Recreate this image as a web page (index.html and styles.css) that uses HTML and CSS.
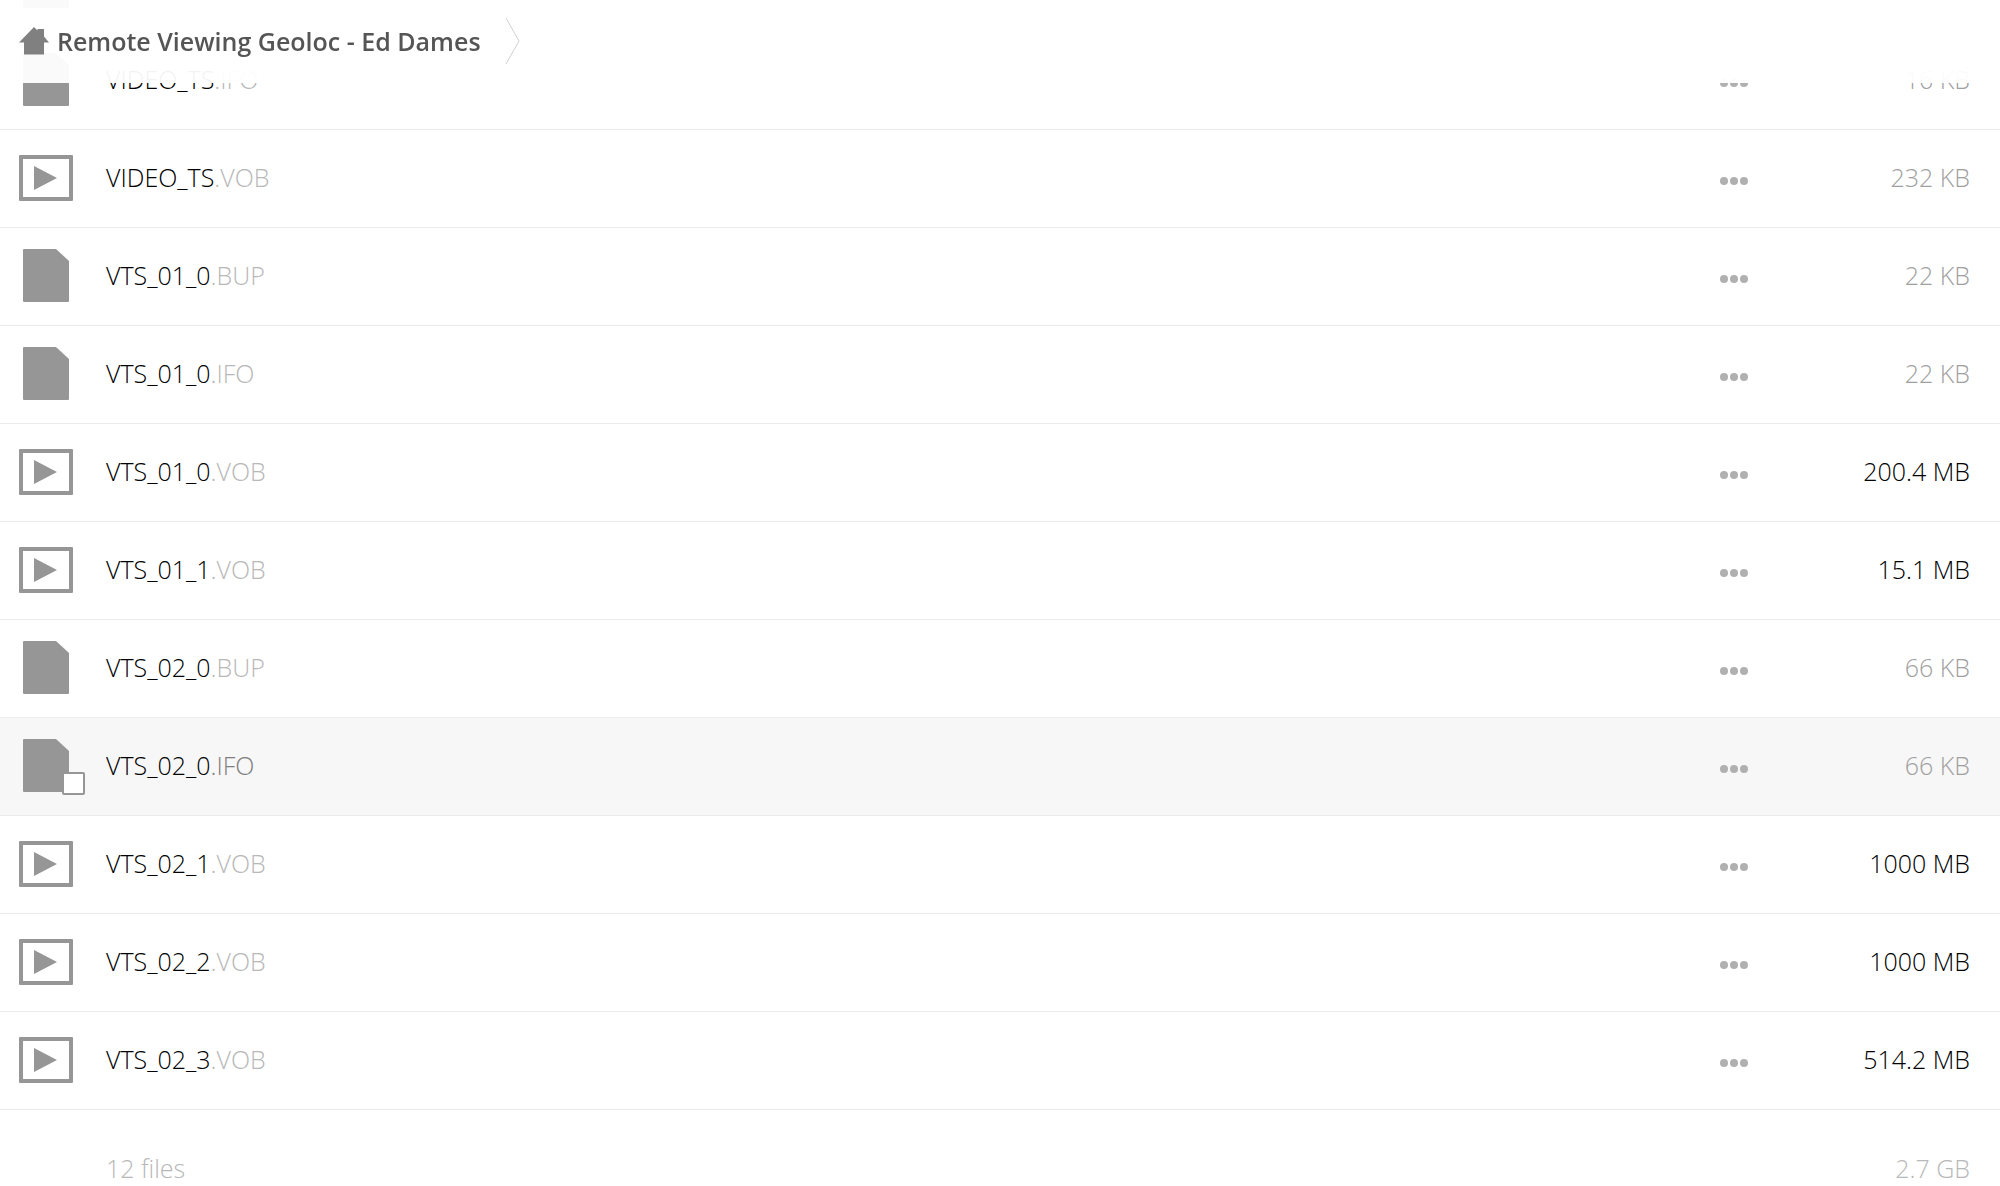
FILE: index.html
```
<!DOCTYPE html>
<html lang="en">

<head>
    <meta charset="utf-8">
    <meta name="viewport" content="width=device-width, initial-scale=1.0">
    <title>Remote Viewing Geoloc - Ed Dames</title>
    <link rel="stylesheet" href="styles.css">
</head>

<body>
    <!-- shared icons -->
    <svg class="sprite" aria-hidden="true">
        <symbol id="icon-file" viewBox="0 0 54 54">
            <path d="M5 0H37L50 12V52a1 1 0 0 1-1 1H5a1 1 0 0 1-1-1V1a1 1 0 0 1 1-1z" />
        </symbol>
        <symbol id="icon-video" viewBox="0 0 54 54">
            <path fill-rule="evenodd" d="M1 4H53a1 1 0 0 1 1 1V49a1 1 0 0 1-1 1H1a1 1 0 0 1-1-1V5a1 1 0 0 1 1-1zM4 8V46H50V8z" />
            <path d="M15 15L38 27L15 39z" />
        </symbol>
        <symbol id="icon-more" viewBox="0 0 28 8">
            <circle cx="4" cy="4" r="4" />
            <circle cx="14" cy="4" r="4" />
            <circle cx="24" cy="4" r="4" />
        </symbol>
    </svg>

    <header id="controls">
        <nav class="breadcrumb">
            <a class="home" href="#" aria-label="Home">
                <svg width="30" height="28" viewBox="0 0 30 28">
                    <path d="M15 0L18.500 3.500V2H25V9.500L30 15.500H25V27.500H5V15.500H0z" />
                </svg>
            </a>
            <a class="crumb" href="#">Remote Viewing Geoloc - Ed Dames</a>
            <svg class="separator" width="16" height="48" viewBox="0 0 16 48">
                <path d="M1 1L14 24L1 47" />
            </svg>
        </nav>
    </header>

    <main id="content">
        <table id="filestable">
            <tbody>
                <tr>
                    <td class="icon"><svg><use href="#icon-file" /></svg></td>
                    <td class="name"><a href="#">VIDEO_TS<span class="extension">.BUP</span></a></td>
                    <td class="actions"><button aria-label="More"><svg><use href="#icon-more" /></svg></button></td>
                    <td class="size small">16 KB</td>
                </tr>
                <tr>
                    <td class="icon"><svg><use href="#icon-file" /></svg></td>
                    <td class="name"><a href="#">VIDEO_TS<span class="extension">.IFO</span></a></td>
                    <td class="actions"><button aria-label="More"><svg><use href="#icon-more" /></svg></button></td>
                    <td class="size small">16 KB</td>
                </tr>
                <tr>
                    <td class="icon"><svg><use href="#icon-video" /></svg></td>
                    <td class="name"><a href="#">VIDEO_TS<span class="extension">.VOB</span></a></td>
                    <td class="actions"><button aria-label="More"><svg><use href="#icon-more" /></svg></button></td>
                    <td class="size small">232 KB</td>
                </tr>
                <tr>
                    <td class="icon"><svg><use href="#icon-file" /></svg></td>
                    <td class="name"><a href="#">VTS_01_0<span class="extension">.BUP</span></a></td>
                    <td class="actions"><button aria-label="More"><svg><use href="#icon-more" /></svg></button></td>
                    <td class="size small">22 KB</td>
                </tr>
                <tr>
                    <td class="icon"><svg><use href="#icon-file" /></svg></td>
                    <td class="name"><a href="#">VTS_01_0<span class="extension">.IFO</span></a></td>
                    <td class="actions"><button aria-label="More"><svg><use href="#icon-more" /></svg></button></td>
                    <td class="size small">22 KB</td>
                </tr>
                <tr>
                    <td class="icon"><svg><use href="#icon-video" /></svg></td>
                    <td class="name"><a href="#">VTS_01_0<span class="extension">.VOB</span></a></td>
                    <td class="actions"><button aria-label="More"><svg><use href="#icon-more" /></svg></button></td>
                    <td class="size">200.4 MB</td>
                </tr>
                <tr>
                    <td class="icon"><svg><use href="#icon-video" /></svg></td>
                    <td class="name"><a href="#">VTS_01_1<span class="extension">.VOB</span></a></td>
                    <td class="actions"><button aria-label="More"><svg><use href="#icon-more" /></svg></button></td>
                    <td class="size">15.1 MB</td>
                </tr>
                <tr>
                    <td class="icon"><svg><use href="#icon-file" /></svg></td>
                    <td class="name"><a href="#">VTS_02_0<span class="extension">.BUP</span></a></td>
                    <td class="actions"><button aria-label="More"><svg><use href="#icon-more" /></svg></button></td>
                    <td class="size small">66 KB</td>
                </tr>
                <tr class="current">
                    <td class="icon">
                        <svg><use href="#icon-file" /></svg>
                        <input type="checkbox" aria-label="Select VTS_02_0.IFO">
                    </td>
                    <td class="name"><a href="#">VTS_02_0<span class="extension">.IFO</span></a></td>
                    <td class="actions"><button aria-label="More"><svg><use href="#icon-more" /></svg></button></td>
                    <td class="size small">66 KB</td>
                </tr>
                <tr>
                    <td class="icon"><svg><use href="#icon-video" /></svg></td>
                    <td class="name"><a href="#">VTS_02_1<span class="extension">.VOB</span></a></td>
                    <td class="actions"><button aria-label="More"><svg><use href="#icon-more" /></svg></button></td>
                    <td class="size">1000 MB</td>
                </tr>
                <tr>
                    <td class="icon"><svg><use href="#icon-video" /></svg></td>
                    <td class="name"><a href="#">VTS_02_2<span class="extension">.VOB</span></a></td>
                    <td class="actions"><button aria-label="More"><svg><use href="#icon-more" /></svg></button></td>
                    <td class="size">1000 MB</td>
                </tr>
                <tr>
                    <td class="icon"><svg><use href="#icon-video" /></svg></td>
                    <td class="name"><a href="#">VTS_02_3<span class="extension">.VOB</span></a></td>
                    <td class="actions"><button aria-label="More"><svg><use href="#icon-more" /></svg></button></td>
                    <td class="size">514.2 MB</td>
                </tr>
            </tbody>
            <tfoot>
                <tr>
                    <td></td>
                    <td class="name">12 files</td>
                    <td></td>
                    <td class="size">2.7 GB</td>
                </tr>
            </tfoot>
        </table>
    </main>
</body>

</html>
```

FILE: styles.css
```
body {
    margin: 0;
    height: 100vh;
    font-family: "Open Sans", sans-serif;
    font-size: 25px;
    font-weight: 300;
    line-height: 32px;
    background: #fff;
    color: #000;
    overflow: hidden;
}

a {
    color: inherit;
    text-decoration: none;
}

.sprite {
    display: none;
}

/* top bar, stays over the scrolled list */
#controls {
    position: fixed;
    top: 0;
    left: 0;
    right: 0;
    height: 83px;
    background: rgba(255, 255, 255, 0.95);
    z-index: 10;
}

.breadcrumb {
    display: flex;
    align-items: center;
    height: 82px;
    padding-left: 19px;
}

.home {
    display: flex;
    margin-right: 8px;
    fill: #808080;
}

.crumb {
    color: #555;
    font-weight: 600;
}

.separator {
    margin-left: 24px;
    fill: none;
    stroke: #d0d0d0;
    stroke-width: 1;
}

/* file list, scrolled to its end */
#content {
    margin-top: -66px;
}

#filestable {
    width: 100%;
    table-layout: fixed;
    border-collapse: separate;
    border-spacing: 0;
}

#filestable td {
    box-sizing: border-box;
    height: 98px;
    padding: 0;
    border-bottom: 1px solid #ebebeb;
    vertical-align: middle;
}

#filestable .current td {
    background: #f7f7f7;
}

#filestable .icon {
    position: relative;
    width: 106px;
    padding-left: 19px;
    padding-bottom: 1px;
}

.icon svg {
    display: block;
    width: 54px;
    height: 54px;
    fill: #969696;
}

.icon input {
    position: absolute;
    left: 62px;
    bottom: 20px;
    width: 23px;
    height: 23px;
    margin: 0;
    appearance: none;
    background: #fff;
    border: 2px solid #969696;
    border-radius: 2px;
}

#filestable .name {
    padding-bottom: 4px;
}

.extension {
    color: #b8b8b8;
}

.current .extension {
    color: #808080;
}

#filestable .actions {
    width: 60px;
}

.actions button {
    display: flex;
    padding: 4px 0 0;
    border: none;
    background: none;
    cursor: pointer;
}

.actions svg {
    width: 28px;
    height: 8px;
    fill: #b0b0b0;
}

#filestable .size {
    width: 220px;
    padding-right: 30px;
    padding-bottom: 4px;
    text-align: right;
}

.size.small {
    color: #a0a0a0;
}

#filestable tfoot td {
    height: 120px;
    border-bottom: none;
    color: #b8b8b8;
}
```
